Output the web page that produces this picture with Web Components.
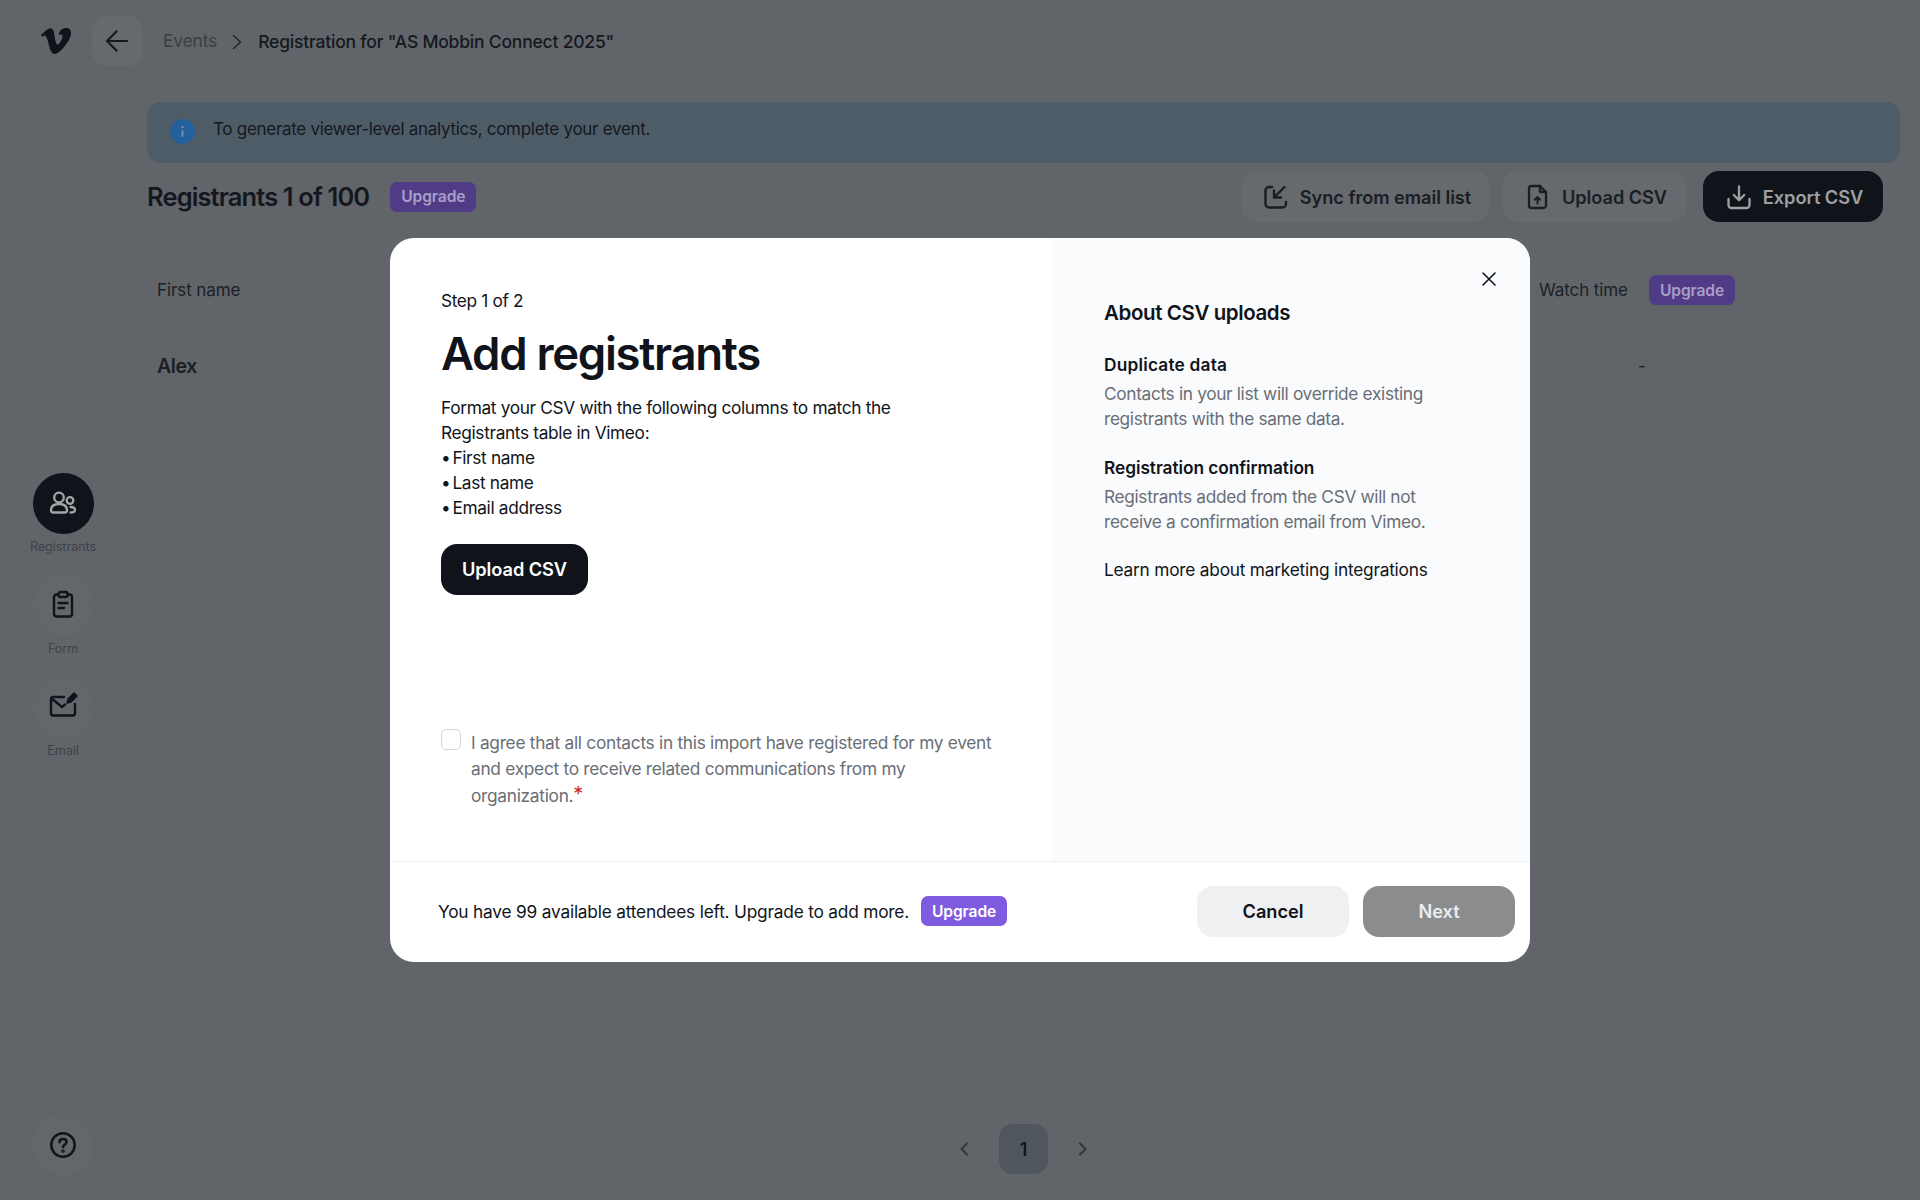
<!DOCTYPE html>
<html>
<head>
<meta charset="utf-8">
<title>Add registrants</title>
<style>
  html, body { margin: 0; padding: 0; }
  body { background: #616569; font-family: Inter, "Liberation Sans", sans-serif; color: #14181e; }
</style>
</head>
<body>
<template id="icons">
  <svg data-name="sync" viewBox="0 0 26 26" width="26" height="26" fill="none" stroke="currentColor" stroke-width="2.4" stroke-linecap="round" stroke-linejoin="round"><path d="M9 3H6a3.5 3.5 0 0 0-3.5 3.5V20A3.5 3.5 0 0 0 6 23.500h13.500A3.500 3.500 0 0 0 23 20v-2"/><path d="M21.500 3 11 13.500M11 6.500v7h7"/></svg>
  <svg data-name="file" viewBox="0 0 26 26" width="26" height="26" fill="none" stroke="currentColor" stroke-width="2.3" stroke-linecap="round" stroke-linejoin="round"><path d="M6.500 2h8.500l6 6v13.500a2.500 2.500 0 0 1-2.500 2.500h-12A2.500 2.500 0 0 1 4 21.500v-17A2.500 2.500 0 0 1 6.500 2Z"/><path d="M15 2v6h6"/><path d="M12.500 19.500v-6M9.800 15.800l2.700-2.800 2.700 2.800" stroke-width="2"/></svg>
  <svg data-name="download" viewBox="0 0 26 26" width="26" height="26" fill="none" stroke="currentColor" stroke-width="2.300" stroke-linecap="round" stroke-linejoin="round"><path d="M13 2.500V16M7.800 11l5.200 5.200 5.200-5.200"/><path d="M2.500 15v6a3 3 0 0 0 3 3h15a3 3 0 0 0 3-3v-6"/></svg>
  <svg data-name="people" viewBox="0 0 30 30" width="30" height="30" fill="none" stroke="currentColor" stroke-width="2.300" stroke-linecap="round" stroke-linejoin="round"><circle cx="11" cy="8.500" r="4.800"/><circle cx="22" cy="11.500" r="3.300"/><path d="M3 21.500c0-4.500 3.500-6.500 8-6.500s8 2 8 6.500c0 1.500-1 2-2.500 2h-11c-1.500 0-2.500-.5-2.500-2Z"/><path d="M22.500 18c2.500 0 4.500 1 4.500 3s-1.800 2.500-4.500 2.500"/></svg>
  <svg data-name="form" viewBox="0 0 30 30" width="30" height="30" fill="none" stroke="currentColor" stroke-width="2.400" stroke-linecap="round" stroke-linejoin="round"><path d="M10 5.500H8.500A2.500 2.500 0 0 0 6 8v17a2.500 2.500 0 0 0 2.500 2.500h13A2.500 2.500 0 0 0 24 25V8a2.500 2.500 0 0 0-2.500-2.500H20"/><rect x="10.500" y="3" width="9" height="5" rx="2"/><path d="M10.500 14h9M10.500 19h5.500"/></svg>
  <svg data-name="email" viewBox="0 0 30 30" width="30" height="30" fill="none" stroke="currentColor" stroke-width="2.400" stroke-linecap="round" stroke-linejoin="round"><path d="M16 6H5.500A2.500 2.500 0 0 0 3 8.500V22a2.500 2.500 0 0 0 2.500 2.500h19A2.500 2.500 0 0 0 27 22V13"/><path d="M3.500 7.500 14 16l3-2.500"/><path d="M19 12l1-4 6-6 3 3-6 6-4 1Z" fill="currentColor" stroke-width="1.500"/></svg>
  <svg data-name="help" viewBox="0 0 28 28" width="28" height="28" fill="none" stroke="currentColor" stroke-width="2.500" stroke-linecap="round" stroke-linejoin="round"><circle cx="14" cy="14" r="11.700"/><path d="M10.500 11.200c0-2.100 1.600-3.300 3.500-3.300s3.500 1.200 3.500 3.100c0 2.800-3.500 2.600-3.500 5"/><circle cx="14" cy="20" r=".6" fill="currentColor"/></svg>
</template>

<vimeo-app>
  <top-bar slot="top"></top-bar>
  <side-nav slot="side"></side-nav>
  <info-banner>To generate viewer-level analytics, complete your event.</info-banner>
  <page-heading></page-heading>
  <registrants-table></registrants-table>
  <page-pager slot="pager"></page-pager>
  <add-registrants-modal slot="modal"></add-registrants-modal>
</vimeo-app>

<script>
const icon = (name) => document.getElementById('icons').content.querySelector(`[data-name="${name}"]`).outerHTML

class UpgradeBadge extends HTMLElement {
  constructor() {
    super()
    this.attachShadow({ mode: 'open' })
    this.shadowRoot.innerHTML = `
      <style>
        :host {
          display: inline-flex;
          align-items: center;
          justify-content: center;
          width: 86px;
          height: 30px;
          border-radius: 7px;
          background: #503b87;
          color: #a99fc6;
          font-size: 15.600px;
          font-weight: 600;
          letter-spacing: -.1px;
        }
        :host(.bright) {
          background: #7f5be0;
          color: #fff;
        }
      </style>
      Upgrade
    `
  }
}
customElements.define('upgrade-badge', UpgradeBadge)

class ActionButton extends HTMLElement {
  constructor() {
    super()
    this.attachShadow({ mode: 'open' })
    this.shadowRoot.innerHTML = `
      <style>
        :host {
          display: inline-flex;
          align-items: center;
          justify-content: center;
          gap: 11px;
          height: 51px;
          box-sizing: border-box;
          border-radius: 16px;
          background: #66696d;
          color: #1a1e24;
          font-size: 18.200px;
          font-weight: 600;
          letter-spacing: -.05px;
        }
        :host(.dark) { background: #10141a; color: #9ea0a2; }
        :host(.solid) { background: #10141a; color: #fff; }
        :host(.soft) { background: #eef0f1; color: #10141a; }
        :host(.off) { background: #8a8c8d; color: #eceded; }
        svg { display: block; }
      </style>
      ${this.getAttribute('icon') ? icon(this.getAttribute('icon')) : ''}
      <slot></slot>
    `
  }
}
customElements.define('action-button', ActionButton)

class TopBar extends HTMLElement {
  constructor() {
    super()
    this.attachShadow({ mode: 'open' })
    this.shadowRoot.innerHTML = `
      <style>
        :host {
          display: flex;
          align-items: center;
          box-sizing: border-box;
          height: 80px;
          padding: 2px 0 0 41px;
          font-size: 17.500px;
        }
        .logo { display: block; margin-right: 21px; color: #10141a; }
        .back {
          display: flex;
          align-items: center;
          justify-content: center;
          width: 50px;
          height: 50px;
          margin-right: 21px;
          border-radius: 14px;
          background: #66696d;
          color: #14181e;
        }
        .events { color: #3b3f45; margin-top: -1px; letter-spacing: -.2px; }
        .sep { margin: 2px 15px 0 14px; display: block; color: #23272d; }
        .title { font-weight: 500; letter-spacing: -.2px; color: #14181e; }
      </style>
      <svg class="logo" width="30" height="30" viewBox="0 0 24 24" fill="currentColor"><path d="M23.977 6.417c-.105 2.338-1.739 5.543-4.894 9.609-3.268 4.247-6.026 6.37-8.29 6.37-1.409 0-2.578-1.294-3.553-3.881L5.322 11.4C4.603 8.816 3.834 7.522 3.01 7.522c-.179 0-.806.378-1.881 1.132L0 7.21a315.89 315.89 0 0 0 3.501-3.128C5.08 2.702 6.266 1.982 7.055 1.91c1.867-.18 3.016 1.1 3.447 3.838.465 2.953.789 4.789.971 5.507.539 2.45 1.131 3.674 1.776 3.674.502 0 1.256-.796 2.265-2.385 1.004-1.589 1.54-2.797 1.612-3.628.144-1.371-.395-2.061-1.614-2.061-.574 0-1.167.121-1.777.391 1.186-3.868 3.434-5.757 6.762-5.637 2.473.06 3.628 1.664 3.493 4.797z"/></svg>
      <div class="back">
        <svg width="24" height="24" viewBox="0 0 24 24" fill="none" stroke="currentColor" stroke-width="2.200" stroke-linecap="round" stroke-linejoin="round"><path d="M22 12H2.500M11.500 2.500 2 12l9.500 9.500"/></svg>
      </div>
      <span class="events">Events</span>
      <svg class="sep" width="12" height="16" viewBox="0 0 12 16" fill="none" stroke="currentColor" stroke-width="1.600" stroke-linecap="round" stroke-linejoin="round"><path d="M2.500 1.500 9.500 8l-7 6.500"/></svg>
      <span class="title">Registration for "AS Mobbin Connect 2025"</span>
    `
  }
}
customElements.define('top-bar', TopBar)

class NavItem extends HTMLElement {
  constructor() {
    super()
    this.attachShadow({ mode: 'open' })
    this.shadowRoot.innerHTML = `
      <style>
        :host {
          display: flex;
          flex-direction: column;
          align-items: center;
          gap: 5px;
          width: 100px;
          height: 102px;
          font-size: 12.500px;
          color: #3d4147;
        }
        .dot {
          display: flex;
          align-items: center;
          justify-content: center;
          width: 61px;
          height: 61px;
          border-radius: 50%;
          background: #63676b;
          color: #10141a;
        }
        :host(:not(.active)) svg { margin-top: -3px; }
        :host(.active) .dot { background: #10141a; color: #a2a4a6; }
      </style>
      <div class="dot">${icon(this.getAttribute('icon'))}</div>
      <slot></slot>
    `
  }
}
customElements.define('nav-item', NavItem)

class SideNav extends HTMLElement {
  constructor() {
    super()
    this.attachShadow({ mode: 'open' })
    this.shadowRoot.innerHTML = `
      <style>
        :host {
          display: flex;
          flex-direction: column;
          align-items: center;
          box-sizing: border-box;
          width: 126px;
          height: 1120px;
          padding: 393px 0 25px;
        }
        .help {
          display: flex;
          align-items: center;
          justify-content: center;
          width: 61px;
          height: 61px;
          margin-top: auto;
          border-radius: 50%;
          background: #63676b;
          color: #10141a;
        }
      </style>
      <nav-item class="active" icon="people">Registrants</nav-item>
      <nav-item icon="form">Form</nav-item>
      <nav-item icon="email">Email</nav-item>
      <div class="help">${icon('help')}</div>
    `
  }
}
customElements.define('side-nav', SideNav)

class InfoBanner extends HTMLElement {
  constructor() {
    super()
    this.attachShadow({ mode: 'open' })
    this.shadowRoot.innerHTML = `
      <style>
        :host {
          display: flex;
          align-items: center;
          gap: 18px;
          box-sizing: border-box;
          height: 61px;
          padding: 0 0 7px 23px;
          border-radius: 14px;
          background: #4e5c68;
          color: #14181e;
          font-size: 17px;
          letter-spacing: -.29px;
        }
        svg { display: block; margin-top: 5px; }
      </style>
      <svg width="25" height="25" viewBox="0 0 25 25"><circle cx="12.500" cy="12.500" r="12.500" fill="#24609c"/><rect x="11.500" y="11" width="2" height="7" rx="1" fill="#6d8eae"/><circle cx="12.500" cy="8" r="1.200" fill="#6d8eae"/></svg>
      <slot></slot>
    `
  }
}
customElements.define('info-banner', InfoBanner)

class PageHeading extends HTMLElement {
  constructor() {
    super()
    this.attachShadow({ mode: 'open' })
    this.shadowRoot.innerHTML = `
      <style>
        :host {
          display: flex;
          align-items: center;
          padding: 8px 17px 0 0;
        }
        h2 {
          margin: 0 21px 0 0;
          font-size: 25.500px;
          font-weight: 600;
          letter-spacing: -.88px;
          color: #14181e;
        }
        .actions { display: flex; gap: 12px; margin-left: auto; }
        .actions action-button { padding-left: 3px; }
        .actions action-button:nth-child(1) { width: 249px; }
        .actions action-button:nth-child(2) { width: 185px; }
        .actions action-button:nth-child(3) { width: 180px; margin-left: 4px; }
      </style>
      <h2>Registrants 1 of 100</h2>
      <upgrade-badge></upgrade-badge>
      <div class="actions">
        <action-button icon="sync">Sync from email list</action-button>
        <action-button icon="file">Upload CSV</action-button>
        <action-button class="dark" icon="download">Export CSV</action-button>
      </div>
    `
  }
}
customElements.define('page-heading', PageHeading)

class RegistrantsTable extends HTMLElement {
  constructor() {
    super()
    this.attachShadow({ mode: 'open' })
    this.shadowRoot.innerHTML = `
      <style>
        :host {
          display: grid;
          grid-template-columns: 1382px 110px 1fr;
          grid-auto-rows: 76px;
          align-items: center;
          padding: 30px 0 0 10px;
          font-size: 17px;
          letter-spacing: -.1px;
          color: #1b1f25;
        }
        .name { font-size: 19.500px; font-weight: 600; letter-spacing: -.4px; }
        .dash { padding-left: 99px; }
        upgrade-badge { justify-self: start; }
      </style>
      <div>First name</div>
      <div>Watch time</div>
      <upgrade-badge></upgrade-badge>
      <div class="name">Alex</div>
      <div class="dash">-</div>
      <div></div>
    `
  }
}
customElements.define('registrants-table', RegistrantsTable)

class PagePager extends HTMLElement {
  constructor() {
    super()
    this.attachShadow({ mode: 'open' })
    this.shadowRoot.innerHTML = `
      <style>
        :host {
          display: flex;
          align-items: center;
          justify-content: center;
          gap: 30px;
          height: 50px;
          color: #34383e;
        }
        .num {
          display: flex;
          align-items: center;
          justify-content: center;
          width: 49px;
          height: 50px;
          border-radius: 14px;
          background: #50565e;
          color: #10141a;
          font-size: 18px;
          font-weight: 600;
        }
        svg { display: block; }
      </style>
      <svg width="10" height="14" viewBox="0 0 10 14" fill="none" stroke="currentColor" stroke-width="2.200" stroke-linecap="round" stroke-linejoin="round"><path d="M8 1.500 2.500 7 8 12.500"/></svg>
      <div class="num">1</div>
      <svg width="10" height="14" viewBox="0 0 10 14" fill="none" stroke="currentColor" stroke-width="2.200" stroke-linecap="round" stroke-linejoin="round"><path d="M2 1.500 7.500 7 2 12.500"/></svg>
    `
  }
}
customElements.define('page-pager', PagePager)

class AddRegistrantsModal extends HTMLElement {
  constructor() {
    super()
    this.attachShadow({ mode: 'open' })
    this.shadowRoot.innerHTML = `
      <style>
        :host {
          position: absolute;
          left: 390px;
          top: 238px;
          display: flex;
          flex-direction: column;
          width: 1140px;
          height: 724px;
          border-radius: 24px;
          overflow: hidden;
          background: #fff;
          color: #10141a;
          font-size: 17.300px;
          letter-spacing: -.2px;
        }
        .body { display: flex; flex: 1; min-height: 0; }
        .left {
          display: flex;
          flex-direction: column;
          box-sizing: border-box;
          width: 663px;
          padding: 52px 51px 0;
        }
        .step { line-height: 22px; letter-spacing: -.35px; }
        h1 {
          margin: 11px 0 9.500px;
          font-size: 45.500px;
          line-height: 62px;
          font-weight: 600;
          letter-spacing: -1.300px;
        }
        .intro { line-height: 25px; letter-spacing: -.34px; }
        .b { margin-right: 2px; }
        .left action-button { width: 147px; margin-top: 24px; }
        .agree {
          display: flex;
          gap: 10px;
          margin-top: auto;
          padding-bottom: 52px;
          color: #696e76;
          line-height: 26.500px;
          letter-spacing: -.28px;
        }
        .box {
          flex: none;
          box-sizing: border-box;
          width: 20px;
          height: 21px;
          border: 1.500px solid #d4d8de;
          border-radius: 5px;
          margin-top: -1px;
          background: #fff;
        }
        .req { display: inline-block; color: #d0271d; margin-left: 1px; transform: translateY(-2px) scale(1.150); }
        .right {
          position: relative;
          flex: 1;
          box-sizing: border-box;
          padding: 62px 40px 0 51px;
          background: #fafbfd;
        }
        .close-btn {
          position: absolute;
          right: 32px;
          top: 32px;
          display: block;
          color: #10141a;
        }
        h3 {
          margin: 0 0 26px;
          font-size: 20.500px;
          line-height: 26px;
          font-weight: 600;
          letter-spacing: -.4px;
        }
        h4 {
          margin: 0;
          font-size: 17.300px;
          line-height: 25px;
          font-weight: 600;
          letter-spacing: -.05px;
        }
        h4.dup { letter-spacing: .2px; }
        .right p {
          margin: 4px 0 24px;
          color: #696e76;
          line-height: 25px;
          letter-spacing: -.34px;
        }
        .learn { line-height: 25px; margin-top: -1.500px; letter-spacing: -.22px; }
        .foot {
          display: flex;
          align-items: center;
          box-sizing: border-box;
          height: 101px;
          padding: 0 15px 2px 48px;
          border-top: 1px solid #eef0f2;
        }
        .foot upgrade-badge { margin-left: 12px; }
        .foot .btns { display: flex; gap: 14px; margin-left: auto; }
        .foot action-button { width: 152px; }
      </style>
      <div class="body">
        <section class="left">
          <div class="step">Step 1 of 2</div>
          <h1>Add registrants</h1>
          <div class="intro">
            Format your CSV with the following columns to match the<br>
            Registrants table in Vimeo:<br>
            <span class="b">•</span>First name<br>
            <span class="b">•</span>Last name<br>
            <span class="b">•</span>Email address
          </div>
          <action-button class="solid">Upload CSV</action-button>
          <div class="agree">
            <div class="box"></div>
            <div>I agree that all contacts in this import have registered for my event and expect to receive related communications from my<br>organization.<span class="req">*</span></div>
          </div>
        </section>
        <aside class="right">
          <svg class="close-btn" width="18" height="18" viewBox="0 0 18 18" fill="none" stroke="currentColor" stroke-width="1.600" stroke-linecap="round"><path d="M3 3l12 12M15 3 3 15"/></svg>
          <h3>About CSV uploads</h3>
          <h4 class="dup">Duplicate data</h4>
          <p>Contacts in your list will override existing<br>registrants with the same data.</p>
          <h4>Registration confirmation</h4>
          <p>Registrants added from the CSV will not<br>receive a confirmation email from Vimeo.</p>
          <div class="learn">Learn more about marketing integrations</div>
        </aside>
      </div>
      <div class="foot">
        <span>You have 99 available attendees left. Upgrade to add more.</span>
        <upgrade-badge class="bright"></upgrade-badge>
        <div class="btns">
          <action-button class="soft">Cancel</action-button>
          <action-button class="off">Next</action-button>
        </div>
      </div>
    `
  }
}
customElements.define('add-registrants-modal', AddRegistrantsModal)

class VimeoApp extends HTMLElement {
  constructor() {
    super()
    this.attachShadow({ mode: 'open' })
    this.shadowRoot.innerHTML = `
      <style>
        :host {
          position: relative;
          display: block;
          width: 1920px;
          height: 1200px;
          overflow: hidden;
        }
        .row { display: flex; height: 1120px; }
        main {
          display: flex;
          flex-direction: column;
          box-sizing: border-box;
          width: 1753px;
          margin-left: 21px;
          padding: 22px 0 26px;
        }
        .rest { flex: 1; min-height: 0; }
        .pager { margin-top: auto; }
      </style>
      <slot name="top"></slot>
      <div class="row">
        <slot name="side"></slot>
        <main>
          <div class="rest"><slot></slot></div>
          <div class="pager"><slot name="pager"></slot></div>
        </main>
      </div>
      <slot name="modal"></slot>
    `
  }
}
customElements.define('vimeo-app', VimeoApp)
</script>
</body>
</html>
